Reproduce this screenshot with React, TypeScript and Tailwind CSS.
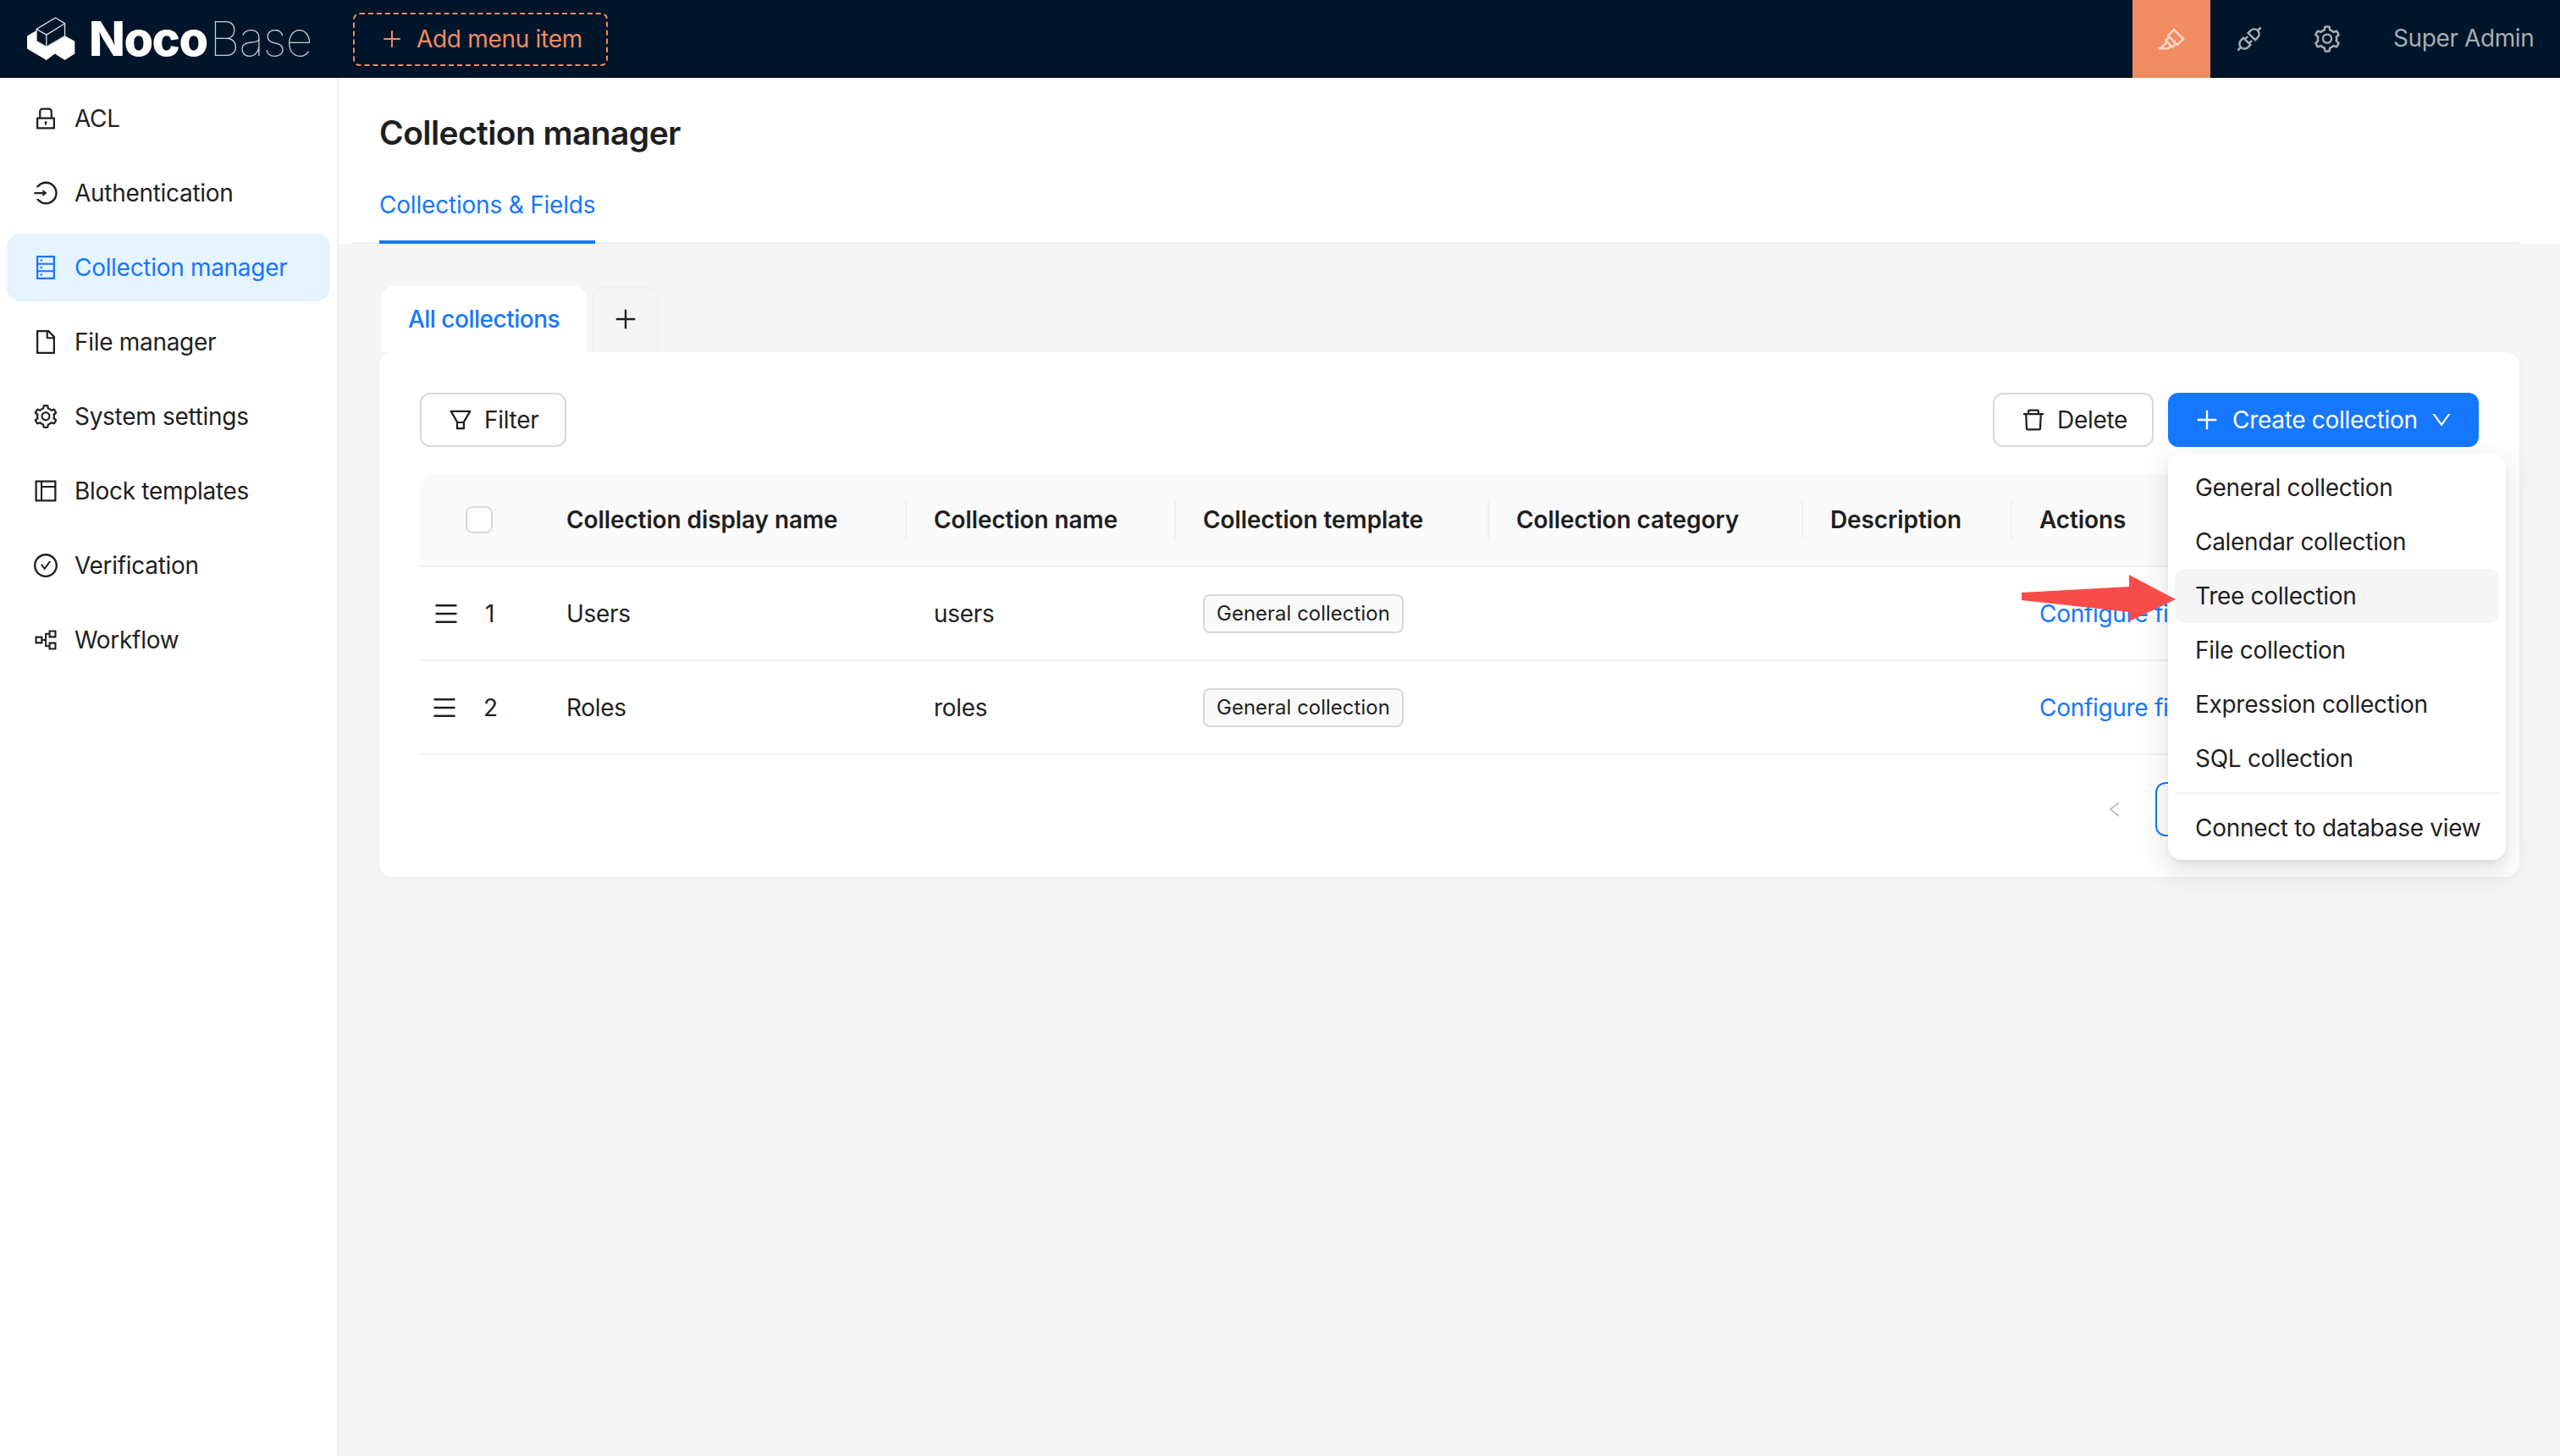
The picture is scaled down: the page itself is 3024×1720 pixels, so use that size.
import {
  AiOutlineApi,
  AiOutlineCheckCircle,
  AiOutlineDatabase,
  AiOutlineDelete,
  AiOutlineDown,
  AiOutlineFile,
  AiOutlineFilter,
  AiOutlineHighlight,
  AiOutlineLayout,
  AiOutlineLeft,
  AiOutlineLock,
  AiOutlineLogin,
  AiOutlineMenu,
  AiOutlinePartition,
  AiOutlinePlus,
  AiOutlineSetting,
} from "react-icons/ai";

const navItems = [
  { label: "ACL", icon: AiOutlineLock },
  { label: "Authentication", icon: AiOutlineLogin },
  { label: "Collection manager", icon: AiOutlineDatabase, active: true },
  { label: "File manager", icon: AiOutlineFile },
  { label: "System settings", icon: AiOutlineSetting },
  { label: "Block templates", icon: AiOutlineLayout },
  { label: "Verification", icon: AiOutlineCheckCircle },
  { label: "Workflow", icon: AiOutlinePartition },
];

const columns = [
  { label: "Collection display name", className: "w-[434px]" },
  { label: "Collection name", className: "w-[318px]" },
  { label: "Collection template", className: "w-[370px]" },
  { label: "Collection category", className: "w-[371px]" },
  { label: "Description", className: "w-[247px]" },
];

const rows = [
  { no: 1, title: "Users", name: "users", dragClass: "ml-[15px]" },
  { no: 2, title: "Roles", name: "roles", dragClass: "ml-[13px]" },
];

const menuItems = [
  "General collection",
  "Calendar collection",
  "Tree collection",
  "File collection",
  "Expression collection",
  "SQL collection",
];

const Logo = () => (
  <div className="flex items-center ml-[32px] w-[385px]">
    <svg width="57" height="52" viewBox="37 30 170 155" className="shrink-0">
      <path d="M37 97 L70 78 V115 L105 135 L172 97 L205 116 V160 L170 182 L135 160 L105 182 L37 142 Z" fill="#fff" />
      <path d="M70 73 L137 33 L170 53 V97 L105 135 L70 115 Z M70 73 L105 93 L170 53 M105 93 V135" fill="none" stroke="#d8dde0" strokeWidth="4" />
    </svg>
    <span className="ml-[16px] text-[56px] leading-none font-extrabold text-white tracking-[-1.5px]">Noco</span>
    <span className="ml-[3px] text-[56px] leading-none font-thin text-[#c8cdd2] tracking-[-1px]">Base</span>
  </div>
);

const Header = () => (
  <header className="h-[92px] bg-[#001529] flex items-center shrink-0">
    <Logo />
    <button className="flex items-center h-[63px] w-[301px] border-2 border-dashed border-[#f18b62] rounded-[8px] pl-[30px] text-[28px] text-[#f18b62]">
      <AiOutlinePlus size={28} className="mr-[15px]" />
      Add menu item
    </button>
    <div className="ml-auto flex items-center h-full">
      <div className="w-[92px] h-full bg-[#f18b62] flex items-center justify-center text-[#fbd5c4]">
        <AiOutlineHighlight size={36} />
      </div>
      <div className="w-[92px] h-full flex items-center justify-center text-[#a6adb4]">
        <AiOutlineApi size={36} />
      </div>
      <div className="w-[92px] h-full flex items-center justify-center text-[#a6adb4]">
        <AiOutlineSetting size={36} />
      </div>
      <span className="w-[229px] pl-[32px] pb-[2px] text-[28px] text-[#a6adb4] tracking-[-0.4px]">Super Admin</span>
    </div>
  </header>
);

const Sidebar = () => (
  <aside className="w-[400px] shrink-0 bg-white border-r-2 border-[#f0f0f0] pt-[8px] px-[8px]">
    {navItems.map((item) => {
      const Icon = item.icon;
      return (
        <div
          key={item.label}
          className={
            item.active
              ? "h-[80px] mb-[8px] w-[382px] rounded-[16px] bg-[#e6f4ff] text-[#1677ff] flex items-center pl-[30px] text-[28px]"
              : "h-[80px] mb-[8px] w-[382px] rounded-[16px] text-[#1f1f1f] flex items-center pl-[30px] text-[28px]"
          }
        >
          <Icon size={32} className="mr-[18px]" />
          {item.label}
        </div>
      );
    })}
  </aside>
);

const Tag = ({ children }: { children: string }) => (
  <span className="inline-block h-[46px] leading-[42px] px-[14px] border-2 border-[#d9d9d9] rounded-[8px] bg-[#fafafa] text-[24px] text-[#1f1f1f] tracking-normal">
    {children}
  </span>
);

const CollectionsTable = () => (
  <div className="mt-[32px] text-[28px] text-[#1f1f1f]">
    <div className="flex items-center h-[110px] bg-[#fafafa] rounded-t-[16px] border-b-2 border-[#f0f0f0] font-semibold tracking-[-0.1px]">
      <div className="w-[141px] shrink-0 pl-[54px]">
        <div className="w-[32px] h-[32px] bg-white border-2 border-[#d9d9d9] rounded-[8px]" />
      </div>
      {columns.map((col) => (
        <div key={col.label} className={`${col.className} shrink-0 pl-[32px] h-[44px] leading-[44px] border-r-2 border-[#f0f0f0]`}>
          {col.label}
        </div>
      ))}
      <div className="pl-[32px]">Actions</div>
    </div>
    {rows.map((row) => (
      <div key={row.no} className="flex items-center h-[111px] border-b-2 border-[#f0f0f0]">
        <div className="w-[141px] shrink-0 flex items-center">
          <AiOutlineMenu size={32} className={row.dragClass} />
          <span className="ml-[30px]">{row.no}</span>
        </div>
        <div className="w-[434px] shrink-0 pl-[32px]">{row.title}</div>
        <div className="w-[318px] shrink-0 pl-[32px]">{row.name}</div>
        <div className="w-[370px] shrink-0 pl-[32px]">
          <Tag>General collection</Tag>
        </div>
        <div className="w-[371px] shrink-0" />
        <div className="w-[247px] shrink-0" />
        <div className="pl-[32px] text-[#1677ff] whitespace-nowrap">Configure fields</div>
      </div>
    ))}
  </div>
);

const CreateMenu = () => (
  <div className="absolute left-[2161px] top-[248px] w-[399px] h-[480px] bg-white rounded-[16px] p-[8px] text-[28px] text-[#1f1f1f] shadow-[0_12px_32px_8px_rgba(0,0,0,0.08),0_6px_12px_-4px_rgba(0,0,0,0.12)]">
    {menuItems.map((item) => (
      <div
        key={item}
        className={
          item === "Tree collection"
            ? "h-[64px] flex items-center px-[24px] rounded-[12px] bg-[#f5f5f5]"
            : "h-[64px] flex items-center px-[24px] rounded-[12px]"
        }
      >
        {item}
      </div>
    ))}
    <div className="h-[2px] bg-[#f0f0f0] my-[8px]" />
    <div className="h-[64px] flex items-center px-[24px] whitespace-nowrap">Connect to database view</div>
  </div>
);

const Arrow = () => (
  <svg width="184" height="56" viewBox="0 0 184 56" className="absolute left-[1988px] top-[391px]">
    <path d="M0 21 L127 14 V0 L182 29 L127 55 V44 L0 30 Z" fill="#f84c4a" />
  </svg>
);

const App = () => {
  return (
    <div className="min-h-screen flex flex-col bg-[#f5f5f5] font-['Inter',sans-serif] tracking-[-0.3px]">
      <Header />
      <div className="flex flex-1">
        <Sidebar />
        <main className="flex-1 min-w-0">
          <div className="h-[196px] bg-white pl-[16px] pr-[48px]">
            <div className="h-full border-b-2 border-[#f0f0f0] pl-[32px] flex flex-col">
              <h1 className="mt-[40px] text-[39px] leading-[50px] font-semibold text-[#1f1f1f] tracking-[-0.6px]">Collection manager</h1>
              <div className="mt-auto self-start h-[62px] leading-[32px] border-b-4 border-[#1677ff] -mb-[2px] text-[28px] text-[#1677ff] tracking-[-0.2px]">
                Collections &amp; Fields
              </div>
            </div>
          </div>

          <div className="relative px-[48px] pt-[50px]">
            {/* Tabs */}
            <div className="flex h-[78px] ml-[2px] text-[28px]">
              <div className="w-[243px] bg-white rounded-t-[16px] flex items-center justify-center font-medium text-[#1677ff] tracking-[-0.5px]">
                All collections
              </div>
              <div className="w-[78px] ml-[7px] bg-[#f5f5f5] border-2 border-b-0 border-[#f0f0f0] rounded-t-[16px] flex items-center justify-center text-[#1f1f1f] pb-[2px]">
                <AiOutlinePlus size={32} />
              </div>
            </div>

            {/* Card */}
            <div className="bg-white rounded-[16px] p-[48px] h-[620px] shadow-[0_2px_8px_rgba(0,0,0,0.03)] overflow-hidden">
              <div className="flex items-center text-[28px] text-[#1f1f1f]">
                <button className="h-[64px] w-[173px] border-2 border-[#d9d9d9] rounded-[12px] flex items-center pl-[30px]">
                  <AiOutlineFilter size={32} className="mr-[12px]" />
                  Filter
                </button>
                <button className="ml-auto h-[64px] w-[190px] border-2 border-[#d9d9d9] rounded-[12px] flex items-center pl-[30px]">
                  <AiOutlineDelete size={32} className="mr-[12px]" />
                  Delete
                </button>
                <button className="ml-[17px] h-[64px] w-[367px] bg-[#1677ff] rounded-[12px] text-white flex items-center pl-[30px]">
                  <AiOutlinePlus size={32} className="mr-[14px]" />
                  Create collection
                  <AiOutlineDown size={28} className="ml-[14px]" />
                </button>
              </div>

              <CollectionsTable />

              <div className="flex items-center mt-[32px] pl-[1990px]">
                <AiOutlineLeft size={24} className="text-[#bfbfbf]" />
                <div className="ml-[36px] w-[64px] h-[64px] border-2 border-[#1677ff] rounded-[12px]" />
              </div>
            </div>

            <CreateMenu />
            <Arrow />
          </div>
        </main>
      </div>
    </div>
  );
};

export default App;
